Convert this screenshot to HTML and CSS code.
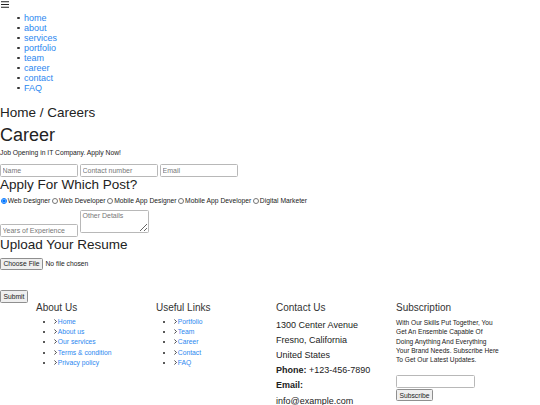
FILE: index.html
```html
<!DOCTYPE html>
<html lang="en">
<head>
<meta charset="utf-8">
<title>Career</title>
<link rel="stylesheet" href="styles.css">
</head>
<body>
<header class="site-header">
  <div class="menu-icon" aria-label="menu">
    <svg width="8" height="7" viewBox="0 0 8 7"><path d="M0 0.75H8M0 3.5H8M0 6.25H8" stroke="#222" stroke-width="1.1"/></svg>
  </div>
  <ul class="nav">
    <li><a href="#">home</a></li>
    <li><a href="#">about</a></li>
    <li><a href="#">services</a></li>
    <li><a href="#">portfolio</a></li>
    <li><a href="#">team</a></li>
    <li><a href="#">career</a></li>
    <li><a href="#">contact</a></li>
    <li><a href="#">FAQ</a></li>
  </ul>
</header>

<main class="career">
  <h2 class="crumb">Home / Careers</h2>
  <h1 class="title">Career</h1>
  <p class="lead">Job Opening in IT Company. Apply Now!</p>
  <form class="apply">
    <div class="field-row">
      <input class="text-input" type="text" placeholder="Name">
      <input class="text-input" type="text" placeholder="Contact number">
      <input class="text-input" type="email" placeholder="Email">
    </div>
    <h2 class="section-title">Apply For Which Post?</h2>
    <div class="radio-row">
      <label class="radio"><input type="radio" name="post" checked>Web Designer</label>
      <label class="radio"><input type="radio" name="post">Web Developer</label>
      <label class="radio"><input type="radio" name="post">Mobile App Designer</label>
      <label class="radio"><input type="radio" name="post">Mobile App Developer</label>
      <label class="radio"><input type="radio" name="post">Digital Marketer</label>
    </div>
    <div class="detail-row">
      <input class="text-input exp" type="text" placeholder="Years of Experience">
      <textarea class="details" placeholder="Other Details"></textarea>
    </div>
    <h2 class="section-title">Upload Your Resume</h2>
    <div class="file-row">
      <span class="btn file-btn">Choose File</span>
      <span class="file-text">No file chosen</span>
    </div>
    <button class="btn submit" type="button">Submit</button>
  </form>
</main>

<footer class="footer">
  <div class="col">
    <h4 class="col-title">About Us</h4>
    <ul class="links">
      <li><svg class="chev" width="3" height="5" viewBox="0 0 3 5"><path d="M0.4 0.5L2.5 2.5L0.4 4.5" fill="none" stroke="#222" stroke-width="0.8"/></svg><a href="#">Home</a></li>
      <li><svg class="chev" width="3" height="5" viewBox="0 0 3 5"><path d="M0.4 0.5L2.5 2.5L0.4 4.5" fill="none" stroke="#222" stroke-width="0.8"/></svg><a href="#">About us</a></li>
      <li><svg class="chev" width="3" height="5" viewBox="0 0 3 5"><path d="M0.4 0.5L2.5 2.5L0.4 4.5" fill="none" stroke="#222" stroke-width="0.8"/></svg><a href="#">Our services</a></li>
      <li><svg class="chev" width="3" height="5" viewBox="0 0 3 5"><path d="M0.4 0.5L2.5 2.5L0.4 4.5" fill="none" stroke="#222" stroke-width="0.8"/></svg><a href="#">Terms &amp; condition</a></li>
      <li><svg class="chev" width="3" height="5" viewBox="0 0 3 5"><path d="M0.4 0.5L2.5 2.5L0.4 4.5" fill="none" stroke="#222" stroke-width="0.8"/></svg><a href="#">Privacy policy</a></li>
    </ul>
  </div>
  <div class="col">
    <h4 class="col-title">Useful Links</h4>
    <ul class="links">
      <li><svg class="chev" width="3" height="5" viewBox="0 0 3 5"><path d="M0.4 0.5L2.5 2.5L0.4 4.5" fill="none" stroke="#222" stroke-width="0.8"/></svg><a href="#">Portfolio</a></li>
      <li><svg class="chev" width="3" height="5" viewBox="0 0 3 5"><path d="M0.4 0.5L2.5 2.5L0.4 4.5" fill="none" stroke="#222" stroke-width="0.8"/></svg><a href="#">Team</a></li>
      <li><svg class="chev" width="3" height="5" viewBox="0 0 3 5"><path d="M0.4 0.5L2.5 2.5L0.4 4.5" fill="none" stroke="#222" stroke-width="0.8"/></svg><a href="#">Career</a></li>
      <li><svg class="chev" width="3" height="5" viewBox="0 0 3 5"><path d="M0.4 0.5L2.5 2.5L0.4 4.5" fill="none" stroke="#222" stroke-width="0.8"/></svg><a href="#">Contact</a></li>
      <li><svg class="chev" width="3" height="5" viewBox="0 0 3 5"><path d="M0.4 0.5L2.5 2.5L0.4 4.5" fill="none" stroke="#222" stroke-width="0.8"/></svg><a href="#">FAQ</a></li>
    </ul>
  </div>
  <div class="col">
    <h4 class="col-title">Contact Us</h4>
    <p class="address">1300 Center Avenue<br>Fresno, California<br>United States<br><strong>Phone:</strong> +123-456-7890<br><strong>Email:</strong><br>info@example.com</p>
  </div>
  <div class="col">
    <h4 class="col-title">Subscription</h4>
    <p class="sub-text">With Our Skills Put Together, You<br>Get An Ensemble Capable Of<br>Doing Anything And Everything<br>Your Brand Needs. Subscribe Here<br>To Get Our Latest Updates.</p>
    <input class="text-input sub-input" type="email">
    <button class="btn subscribe" type="button">Subscribe</button>
  </div>
</footer>
</body>
</html>
```

FILE: styles.css
```css
html, body {
  margin: 0;
  padding: 0;
}
body {
  font-family: "Liberation Sans", Arial, sans-serif;
  color: #222;
  background: #fff;
}
a {
  color: #2b87f0;
  text-decoration: none;
}

.menu-icon {
  height: 9px;
  padding-left: 1px;
  padding-top: 1px;
  box-sizing: border-box;
  line-height: 0;
}
.nav {
  margin: 4px 0 0;
  padding-left: 17px;
  font-size: 9px;
  line-height: 10px;
  list-style: none;
}
.nav li::before {
  content: "";
  display: inline-block;
  width: 2.5px;
  height: 2.5px;
  margin-right: 4.5px;
  border-radius: 50%;
  background: #333;
  vertical-align: 2px;
}

.crumb {
  margin: 12px 0 0;
  font-size: 13.5px;
  line-height: 16px;
  font-weight: normal;
}
.title {
  margin: 3.5px 0 0;
  font-size: 18px;
  line-height: 20px;
  font-weight: normal;
}
.lead {
  margin: 4px 0 0;
  font-size: 6.75px;
  line-height: 8px;
}

.apply {
  margin: 0;
}
.field-row {
  display: flex;
  gap: 2px;
  margin-top: 7px;
}
.text-input {
  box-sizing: border-box;
  width: 78px;
  height: 13px;
  margin: 0;
  padding: 0 1.5px;
  border: 1px solid #b8b8b8;
  border-radius: 1.5px;
  font-family: "Liberation Sans", Arial, sans-serif;
  font-size: 7px;
  color: #222;
  background: #fff;
  outline: none;
}
.text-input::placeholder,
.details::placeholder {
  color: #777;
}
.section-title {
  margin: 0;
  font-size: 13.5px;
  line-height: 16px;
  font-weight: normal;
}
.radio-row {
  margin-top: 4px;
  display: flex;
  font-size: 6.75px;
  line-height: 8px;
}
.radio {
  display: inline-flex;
  align-items: center;
}
.radio input {
  width: 6px;
  height: 6px;
  margin: 0 1.2px 0 1.5px;
}
.radio:first-child input {
  margin-left: 0.5px;
}
.detail-row {
  display: flex;
  align-items: flex-start;
  gap: 2px;
  margin-top: 5px;
}
.exp {
  margin-top: 14px;
}
.details {
  box-sizing: border-box;
  width: 69px;
  height: 23px;
  margin: 0;
  padding: 1px 1.5px;
  border: 1px solid #b8b8b8;
  border-radius: 1.5px;
  font-family: "Liberation Sans", Arial, sans-serif;
  font-size: 7px;
  resize: vertical;
  outline: none;
}
.file-row {
  display: flex;
  align-items: center;
  gap: 2.5px;
  margin-top: 5px;
}
.btn {
  box-sizing: border-box;
  display: inline-flex;
  align-items: center;
  justify-content: center;
  margin: 0;
  padding: 0;
  border: 1px solid #8f8f8f;
  border-radius: 1.5px;
  background: #efefef;
  font-family: "Liberation Sans", Arial, sans-serif;
  font-size: 6.75px;
  color: #222;
}
.file-btn {
  width: 43px;
  height: 12px;
}
.file-text {
  font-size: 6.75px;
}
.submit {
  display: flex;
  margin-top: 20px;
  width: 28px;
  height: 13px;
}

.footer {
  display: grid;
  grid-template-columns: repeat(4, 120px);
  padding-left: 36px;
  margin: 0;
}
.col-title {
  margin: 0;
  font-size: 10px;
  line-height: 10px;
  font-weight: normal;
  color: #333;
}
.links {
  margin: 4.5px 0 0;
  padding-left: 17.5px;
  font-size: 6.75px;
  line-height: 10.2px;
}
.chev {
  margin-right: 1.3px;
  vertical-align: 0;
}
.address {
  margin: 5px 0 0;
  font-size: 9px;
  line-height: 15.2px;
}
.sub-text {
  margin: 5.5px 0 0;
  font-size: 6.6px;
  line-height: 9.3px;
  white-space: nowrap;
}
.sub-input {
  display: block;
  margin-top: 11px;
  width: 79px;
  height: 12.5px;
}
.subscribe {
  display: flex;
  margin-top: 1.5px;
  width: 37px;
  height: 11.5px;
}
```
